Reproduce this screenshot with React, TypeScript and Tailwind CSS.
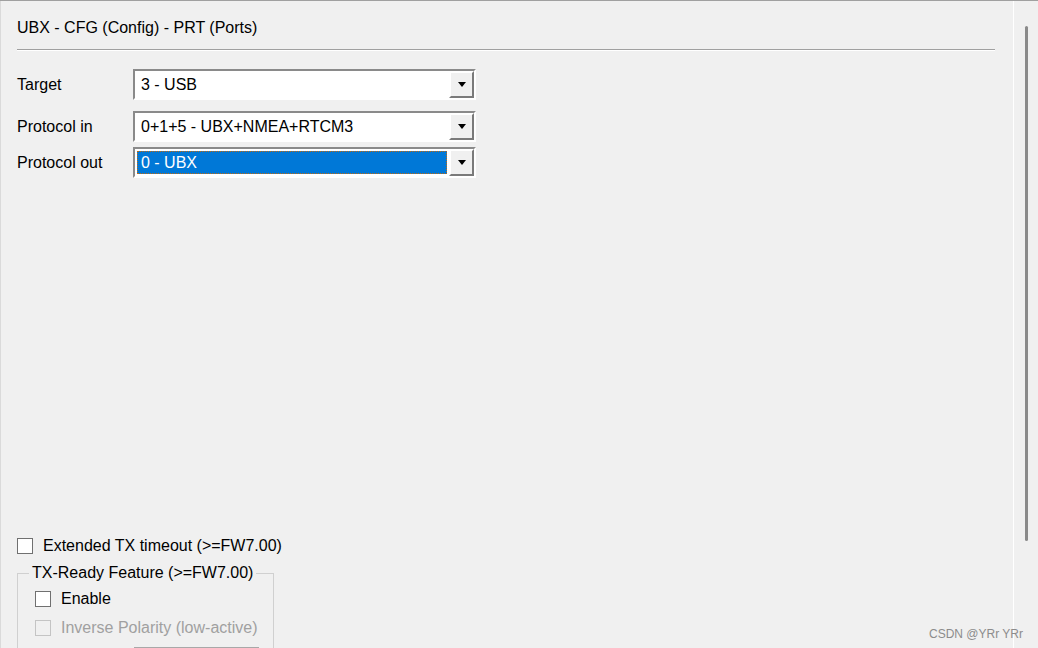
import React from 'react';

const font = { fontFamily: '"Liberation Sans", Arial, sans-serif' };

function Combo({ value, selected = false, h }: { value: string; selected?: boolean; h: string }) {
  return (
    <div className={`flex w-[343px] border-2 border-t-[#8a8a8a] border-l-[#8a8a8a] border-b-white border-r-white ${h}`}>
      <div className="flex flex-1 items-center bg-white p-[2px]">
        {selected ? (
          <div className="flex h-full flex-1 items-center border border-dotted border-[#c06a10] bg-[#0078d7] pl-[3px] text-white">
            {value}
          </div>
        ) : (
          <span className="pl-[4px] text-black">{value}</span>
        )}
      </div>
      <div className="flex w-[25px] items-center justify-center border-2 border-t-white border-l-white border-b-[#7a7a7a] border-r-[#7a7a7a] bg-[#f0f0f0]">
        <div className="h-0 w-0 border-x-[4px] border-t-[5px] border-x-transparent border-t-black" />
      </div>
    </div>
  );
}

function Row({ label, value, selected, h, className }: { label: string; value: string; selected?: boolean; h: string; className: string }) {
  return (
    <div className={`flex items-center ${className}`}>
      <div className="w-[116px] text-black">{label}</div>
      <Combo value={value} selected={selected} h={h} />
    </div>
  );
}

function Check({ label, disabled = false }: { label: string; disabled?: boolean }) {
  return (
    <div className="flex items-center">
      <div
        className={`h-[16px] w-[16px] shrink-0 border ${
          disabled ? 'border-[#c4c4c4] bg-[#f0f0f0]' : 'border-[#707070] bg-white'
        }`}
      />
      <span className={`ml-[10px] ${disabled ? 'text-[#a0a0a0]' : 'text-black'}`}>{label}</span>
    </div>
  );
}

export default function App() {
  return (
    <div style={font} className="relative flex h-[648px] w-[1038px] overflow-hidden border-t border-[#a0a0a0] bg-[#f0f0f0] text-[16px] leading-[20px]">
      {/* main pane */}
      <div className="flex w-[1013px] flex-col border-l border-[#dadada] pl-[16px]">
        <div className="mt-[17px] text-black">UBX - CFG (Config) - PRT (Ports)</div>
        <div className="mt-[11px] w-[978px] border-t border-b border-t-[#a0a0a0] border-b-white" />

        <Row label="Target" value="3 - USB" h="h-[31px]" className="mt-[18px]" />
        <Row label="Protocol in" value="0+1+5 - UBX+NMEA+RTCM3" h="h-[31px]" className="mt-[11px]" />
        <Row label="Protocol out" value="0 - UBX" selected h="h-[31px]" className="mt-[5px]" />

        <div className="mt-[358px]">
          <Check label="Extended TX timeout (>=FW7.00)" />
        </div>

        <div className="relative mt-[17px] w-[257px] border border-[#d0d0d0] pb-[20px] pl-[17px] pt-[11px]">
          <div className="absolute -top-[11px] left-[11px] bg-[#f0f0f0] px-[3px] text-black">TX-Ready Feature (&gt;=FW7.00)</div>
          <div className="mt-[4px]">
            <Check label="Enable" />
          </div>
          <div className="mt-[9px]">
            <Check label="Inverse Polarity (low-active)" disabled />
          </div>
          <div className="ml-[99px] mt-[9px] h-[20px] w-[125px] border-t-2 border-[#a8a8a8] bg-[#f0f0f0]" />
        </div>
      </div>

      {/* scrollbar */}
      <div className="flex flex-1 justify-center border-l border-white pt-[25px]">
        <div className="ml-[1px] h-[515px] w-[3px] rounded-full bg-[#8a8a8a]" />
      </div>

      <div className="absolute bottom-[7px] right-[15px] text-[12px] leading-[14px] text-[#8c8c8c]">CSDN @YRr YRr</div>
    </div>
  );
}
